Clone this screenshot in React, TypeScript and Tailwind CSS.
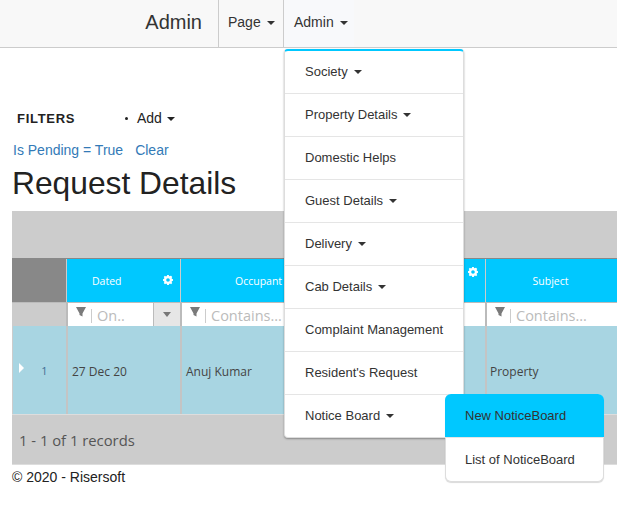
const gridFont = "font-['Open_Sans',sans-serif]"
const gridCols = 'grid grid-cols-[54px_114px_156px_149px_132px]'

function Caret({ className = 'ml-[6px]' }: { className?: string }) {
    return (
        <span className={`inline-block w-0 h-0 align-middle border-x-[4px] border-x-transparent border-t-[4px] border-t-current ${className}`} />
    )
}

function Gear() {
    return (
        <svg viewBox="0 0 12 12" className="w-[10px] h-[10px]" fill="#fff">
            <path
                fillRule="evenodd"
                d="M5 0h2l.3 1.600 1-.4L9.700 .9 11.100 2.300l-.8 1.300.4 1L12 5v2l-1.300.4-.4 1 .8 1.300-1.400 1.400-1.300-.8-1 .4L7 12H5l-.3-1.300-1-.4-1.300.8L.9 9.700l.8-1.300-.4-1L0 7V5l1.300-.4.4-1-.8-1.300L2.300.9l1.300.8 1-.4zM6 3.800a2.200 2.200 0 1 0 0 4.400 2.200 2.200 0 0 0 0-4.400z"
            />
        </svg>
    )
}

function Funnel() {
    return (
        <svg viewBox="0 0 10 10" className="w-[10px] h-[10px] shrink-0 -mt-[5px]" fill="#7a7a7a">
            <path d="M0 0h10L6.500 6.500V9.500L3.500 8V6.500z" />
        </svg>
    )
}

function FilterBox({ placeholder, withButton }: { placeholder: string, withButton?: boolean }) {
    return (
        <div className="flex h-full bg-white">
            <div className="flex-1 flex items-center pl-[8px] min-w-0">
                <Funnel />
                <span className="ml-[5px] w-px h-[14px] bg-[#ccc] mt-[3px]" />
                <span className={`ml-[5px] pt-[3px] text-[14.5px] leading-[20px] text-[#bbb] whitespace-nowrap ${gridFont}`}>{placeholder}</span>
            </div>
            {withButton && (
                <div className="w-[27px] bg-[#e6e6e6] border-l border-[#bbb] flex items-center justify-center">
                    <span className="w-0 h-0 border-x-[4px] border-x-transparent border-t-[5px] border-t-[#777]" />
                </div>
            )}
        </div>
    )
}

const menuItems = [
    { label: 'Society', caret: true },
    { label: 'Property Details', caret: true },
    { label: 'Domestic Helps' },
    { label: 'Guest Details', caret: true },
    { label: 'Delivery', caret: true },
    { label: 'Cab Details', caret: true },
    { label: 'Complaint Management' },
    { label: "Resident's Request" },
    { label: 'Notice Board', caret: true },
]

export default function App() {
    return (
        <div className="relative w-[617px] h-[508px] overflow-hidden bg-white text-[#222] font-['Liberation_Sans',Arial,sans-serif]">
            <nav className="h-[48px] bg-[#f8f8f8] border-b border-[#ccc] flex">
                <div className="w-[218px] text-right pr-[16px] pt-[10px] text-[20px] leading-[24px] text-[#333]">Admin</div>
                <div className="w-[65px] border-l border-[#ccc] pl-[9px] pt-[14px] text-[14px] leading-[16px] text-[#333]">
                    Page<Caret />
                </div>
                <div className="w-[71px] border-l border-[#ccc] bg-[#f8f9fb] pl-[10px] pt-[14px] text-[14px] leading-[16px] text-[#333]">
                    Admin<Caret />
                </div>
            </nav>

            <div className="mt-[62px] flex items-center h-[16px] text-[14px]">
                <span className="ml-[17px] w-[108px] pt-[1px] font-bold text-[13px] tracking-[0.7px] text-[#222]">FILTERS</span>
                <span className="w-[3px] h-[3px] rounded-full bg-[#222]" />
                <span className="ml-[9px] text-[#222]">Add<Caret className="ml-[5px]" /></span>
            </div>

            <div className="mt-[16px] ml-[13px] h-[16px] leading-[16px] text-[14px] text-[#337ab7] flex gap-[12px]">
                <span>Is Pending = True</span>
                <span>Clear</span>
            </div>

            <h1 className="ml-[12px] mt-[7px] h-[37px] text-[31.75px] leading-[36px] text-[#222]">Request Details</h1>

            <div className={`ml-[12px] mt-[9px] w-[605px] overflow-hidden ${gridFont}`}>
                <div className="h-[48px] bg-[#ccc] border-b border-[#888]" />
                <div className={`${gridCols} h-[43px] text-[10.5px] text-white`}>
                    <div className="bg-[#888]" />
                    <div className="relative bg-[#00c8ff] border-l border-[#ccc] flex items-center pl-[25px] pt-[2px]">
                        Dated
                        <span className="absolute right-[7px] top-[16px]"><Gear /></span>
                    </div>
                    <div className="bg-[#00c8ff] border-l border-[#ccc] flex items-center pl-[54px] pt-[2px]">Occupant</div>
                    <div className="relative bg-[#00c8ff]">
                        <span className="absolute right-[7px] top-[8px]"><Gear /></span>
                    </div>
                    <div className="bg-[#00c8ff] border-l border-[#ccc] flex items-center justify-center pr-[2px] pt-[2px]">Subject</div>
                </div>
                <div className={`${gridCols} h-[24px] bg-[#bbb] border-y border-[#bbb]`}>
                    <div className="bg-[#ccc]" />
                    <div className="pl-[2px]"><FilterBox placeholder="On.." withButton /></div>
                    <div className="pl-[2px]"><FilterBox placeholder="Contains..." /></div>
                    <div className="bg-white" />
                    <div className="pl-[2px]"><FilterBox placeholder="Contains..." /></div>
                </div>
                <div className={`${gridCols} h-[88px] bg-[#a8d5e2] text-[12px] text-[#444]`}>
                    <div className="relative border-l border-[#ccc] flex items-center justify-center pl-[10px] pt-[3px]">
                        <span className="absolute left-[6px] top-[37px] w-0 h-0 border-y-[5px] border-y-transparent border-l-[5px] border-l-white" />
                        <span className="text-[11px] text-[#3f6d94]">1</span>
                    </div>
                    <div className="border-l-2 border-[#c4c4c4] flex items-center pl-[4px] pt-[3px]">27 Dec 20</div>
                    <div className="border-l-2 border-[#c4c4c4] flex items-center pl-[4px] pt-[3px]">Anuj Kumar</div>
                    <div />
                    <div className="border-l-2 border-[#c4c4c4] flex items-center pl-[3px] pt-[3px]">Property</div>
                </div>
                <div className="h-[51px] bg-[#ccc] border-y border-[#ddd] flex items-center pl-[7px] pt-[1px] text-[14.8px] text-[#555]">
                    1 - 1 of 1 records
                </div>
            </div>

            <div className="ml-[12px] mt-[4px] text-[14px] leading-[16px] text-[#222]">© 2020 - Risersoft</div>

            <ul className="absolute left-[284px] top-[49px] w-[180px] bg-white border border-[#ddd] border-t-[2px] border-t-[#00c8ff] rounded-[4px] shadow-[0_1px_2px_rgba(0,0,0,0.35)] text-[13px] text-[#333]">
                {menuItems.map(item => (
                    <li key={item.label} className="h-[43px] pl-[20px] pb-[1px] flex items-center border-b border-[#e5e5e5] last:border-b-0 last:h-[42px]">
                        <span>{item.label}{item.caret && <Caret />}</span>
                    </li>
                ))}
            </ul>

            <ul className="absolute left-[445px] top-[394px] w-[159px] bg-white rounded-[6px] border border-[#ddd] border-t-0 shadow-[0_1px_1px_rgba(0,0,0,0.15)] text-[13px] text-[#333]">
                <li className="h-[44px] -mx-px pl-[20px] pt-[1px] flex items-center bg-[#00c8ff] rounded-t-[6px] border-b border-[#e5e5e5]">New NoticeBoard</li>
                <li className="h-[43px] pl-[19px] flex items-center">List of NoticeBoard</li>
            </ul>
        </div>
    )
}
